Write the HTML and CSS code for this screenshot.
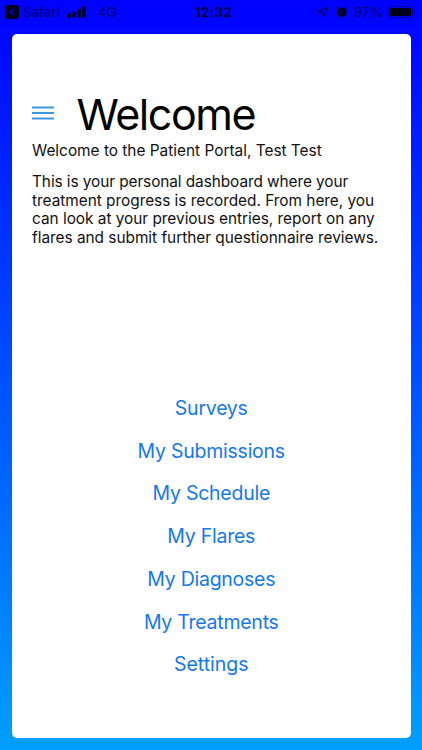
FILE: index.html
```html
<!DOCTYPE html>
<html lang="en">
<head>
<meta charset="utf-8">
<meta name="viewport" content="width=device-width, initial-scale=1">
<title>Patient Portal</title>
<link rel="stylesheet" href="styles.css">
</head>
<body>
<header class="status">
  <div class="status-left">
    <svg class="back" width="14" height="14" viewBox="0 0 14 14"><rect width="14" height="14" rx="3"/><path d="M8.7 3.6 5 7l3.7 3.4"/></svg>
    <span class="app">Safari</span>
    <svg class="signal" width="20" height="12" viewBox="0 0 20 12"><rect x="0.5" y="7.5" width="3.5" height="4" rx=".7"/><rect x="5.4" y="5.5" width="3.5" height="6" rx=".7"/><rect x="10.3" y="3" width="3.5" height="8.5" rx=".7"/><rect x="15.2" y="0.5" width="3.5" height="11" rx=".7"/></svg>
    <span class="network">4G</span>
  </div>
  <time class="clock">12:32</time>
  <div class="status-right">
    <svg class="location" width="12" height="12" viewBox="0 0 12 12"><path d="M10.8 1 1 5.4l4.8.8.7 4.8z"/></svg>
    <svg class="alarm" width="12" height="12" viewBox="0 0 12 12"><circle cx="6" cy="6.4" r="4.7"/><path class="bells" d="M1 2.7 3 1M11 2.7 9 1"/><path class="hands" d="M6 3.7v3L4.2 7.6"/></svg>
    <span class="percent">97%</span>
    <svg class="battery" width="29" height="12" viewBox="0 0 29 12"><rect class="shell" x=".5" y=".5" width="25" height="11" rx="2.5"/><rect x="2" y="2" width="22" height="8" rx="1"/><path class="cap" d="M27 4v4c1.3-.7 1.3-3.3 0-4z"/></svg>
  </div>
</header>
<main class="card">
  <div class="heading">
    <svg class="menu" width="22" height="14" viewBox="0 0 22 14"><path d="M0 1.5h22M0 7h22M0 12.5h22"/></svg>
    <h1>Welcome</h1>
  </div>
  <p class="greeting">Welcome to the Patient Portal, Test Test</p>
  <p class="intro"><span class="lead">This is your personal dashboard where your</span><br>treatment progress is recorded. From here, you<br>can look at your previous entries, report on any<br>flares and submit further questionnaire reviews.</p>
  <nav class="links">
    <a>Surveys</a>
    <a>My Submissions</a>
    <a>My Schedule</a>
    <a>My Flares</a>
    <a>My Diagnoses</a>
    <a>My Treatments</a>
    <a class="settings">Settings</a>
  </nav>
</main>
</body>
</html>
```
FILE: styles.css
```css
* { box-sizing: border-box; }
body {
  margin: 0;
  width: 422px;
  height: 750px;
  overflow: hidden;
  display: flex;
  flex-direction: column;
  background: linear-gradient(#0000ff, #009fff);
  font-family: Inter, "Liberation Sans", sans-serif;
  color: #111;
}
.status {
  height: 34px;
  padding: 4px 6px 0 5px;
  display: grid;
  grid-template-columns: 190px auto 1fr;
  align-items: start;
  font-size: 13.5px;
  line-height: 16px;
  color: #00006c;
}
.status-left, .status-right { display: flex; align-items: center; height: 16px; }
.status-right { justify-content: flex-end; }
.status svg { fill: #000018; flex: none; }
.back path { fill: none; stroke: #0000e0; stroke-width: 1.5; }
.app { width: 40px; margin-left: 4px; letter-spacing: -.1px; }
.signal { margin-left: 4px; }
.network { margin-left: 11px; }
.clock { font-weight: 600; color: #000030; letter-spacing: .35px; }
.status .location { fill: none; stroke: #000060; stroke-width: 1.1; stroke-linejoin: round; }
.alarm { margin-left: 7px; }
.alarm .bells { fill: none; stroke: #000030; stroke-width: 1.6; }
.alarm .hands { fill: none; stroke: #0000dd; stroke-width: 1; }
.percent { margin-left: 6px; }
.battery { margin-left: 4px; }
.battery .shell { fill: none; stroke: #000099; }
.battery .cap { fill: #000080; }
.card {
  width: 399px;
  height: 704px;
  margin-left: 11.5px;
  padding: 55px 20px 0 20.5px;
  background: #fff;
  border-radius: 5px;
}
.heading { height: 50px; display: flex; align-items: center; }
.menu { margin-bottom: 2px; fill: none; stroke: #3d96e0; stroke-width: 1.9; }
h1 {
  margin: 0 0 0 22.5px;
  font-size: 43px;
  line-height: 50px;
  font-weight: 400;
  letter-spacing: -1.45px;
  color: #000;
}
p { margin: 0; font-size: 15.4px; line-height: 18.8px; letter-spacing: -.02px; white-space: nowrap; }
.greeting { margin-top: 3px; letter-spacing: 0; }
.intro { margin-top: 12px; }
.lead { letter-spacing: -.08px; }
.links {
  margin-top: 139px;
  display: flex;
  flex-direction: column;
  align-items: center;
  font-size: 19.5px;
  line-height: 42.75px;
  letter-spacing: -.25px;
  color: #1478ee;
}
.settings { letter-spacing: 0; }
```
